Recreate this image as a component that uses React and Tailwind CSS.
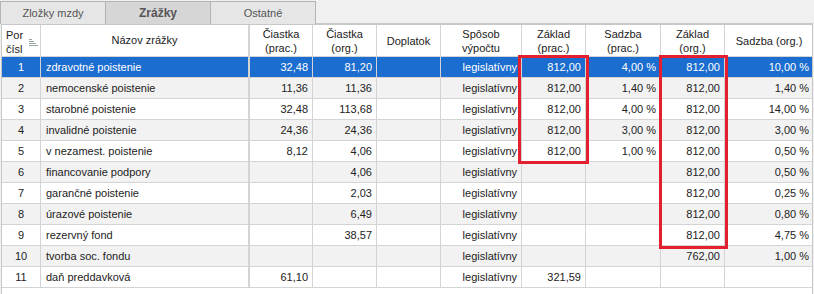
import React from 'react';

const cols = 'grid-cols-[39px_209px_63px_64px_64px_81px_64px_75px_64px_88px]';

const rows = [
    ['1', 'zdravotné poistenie', '32,48', '81,20', '', 'legislatívny', '812,00', '4,00 %', '812,00', '10,00 %'],
    ['2', 'nemocenské poistenie', '11,36', '11,36', '', 'legislatívny', '812,00', '1,40 %', '812,00', '1,40 %'],
    ['3', 'starobné poistenie', '32,48', '113,68', '', 'legislatívny', '812,00', '4,00 %', '812,00', '14,00 %'],
    ['4', 'invalidné poistenie', '24,36', '24,36', '', 'legislatívny', '812,00', '3,00 %', '812,00', '3,00 %'],
    ['5', 'v nezamest. poistenie', '8,12', '4,06', '', 'legislatívny', '812,00', '1,00 %', '812,00', '0,50 %'],
    ['6', 'financovanie podpory', '', '4,06', '', 'legislatívny', '', '', '812,00', '0,50 %'],
    ['7', 'garančné poistenie', '', '2,03', '', 'legislatívny', '', '', '812,00', '0,25 %'],
    ['8', 'úrazové poistenie', '', '6,49', '', 'legislatívny', '', '', '812,00', '0,80 %'],
    ['9', 'rezervný fond', '', '38,57', '', 'legislatívny', '', '', '812,00', '4,75 %'],
    ['10', 'tvorba soc. fondu', '', '', '', 'legislatívny', '', '', '762,00', '1,00 %'],
    ['11', 'daň preddavková', '61,10', '', '', 'legislatívny', '321,59', '', '', ''],
];

const headers = [
    ['Čiastka', '(prac.)'],
    ['Čiastka', '(org.)'],
    ['Doplatok'],
    ['Spôsob', 'výpočtu'],
    ['Základ', '(prac.)'],
    ['Sadzba', '(prac.)'],
    ['Základ', '(org.)'],
    ['Sadzba (org.)'],
];

const SortIcon = () => (
    <svg width="9" height="7" viewBox="0 0 9 7" className="ml-[6px] mt-[11px]">
        <rect x="0" y="0" width="3" height="1" fill="#9aa8a0" />
        <rect x="0" y="2" width="5" height="1" fill="#9aa8a0" />
        <rect x="0" y="4" width="7" height="1" fill="#9aa8a0" />
        <rect x="0" y="6" width="9" height="1" fill="#9aa8a0" />
    </svg>
);

const Tab = ({ label, active }) => (
    <div
        className={`w-[106px] h-[23px] flex items-center justify-center border border-b-0 border-[#b4b4b4] -ml-px first:ml-0 text-[#555] ${
            active ? 'bg-[#d6d6d6] font-bold text-[12px]' : 'bg-[#e6e6e6]'
        }`}
    >
        {label}
    </div>
);

export default function App() {
    return (
        <div
            className="w-[814px] h-[294px] bg-[#f0f0f0] overflow-hidden text-[11px] text-[#222] relative"
            style={{ fontFamily: '"Liberation Sans", Arial, sans-serif' }}
        >
            <div className="flex pt-px h-[23px]">
                <Tab label="Zložky mzdy" />
                <Tab label="Zrážky" active />
                <Tab label="Ostatné" />
            </div>

            <div className="ml-px w-[812px] h-[271px] bg-white border-l border-t-2 border-r border-[#c8c8c8]">
                {/* header */}
                <div className={`grid ${cols} h-[32px]`}>
                    <div className="flex items-start pl-[4px] pt-[3px] leading-[14px] border-r border-b border-[#d4d4d4]">
                        <div>Por<br />čísl</div>
                        <SortIcon />
                    </div>
                    <div className="flex items-center justify-center border-r-2 border-b border-[#d4d4d4]">Názov zrážky</div>
                    {headers.map((h, i) => (
                        <div
                            key={i}
                            className="flex flex-col items-center justify-center leading-[14px] border-r border-b border-[#d4d4d4] last:border-r-0"
                        >
                            {h.map((l) => (
                                <span key={l}>{l}</span>
                            ))}
                        </div>
                    ))}
                </div>

                {/* rows */}
                {rows.map((r, ri) => {
                    const sel = ri === 0;
                    const bg = sel ? 'bg-[#1c6dd0] text-white' : ri % 2 === 1 ? 'bg-[#f2f2f2]' : 'bg-white';
                    const line = sel ? 'border-[#5b97e0]' : 'border-[#d4d4d4]';
                    return (
                        <div key={ri} className={`grid ${cols} h-[21px] ${bg}`}>
                            {r.map((c, ci) => {
                                let align = 'justify-end pr-[4px]';
                                if (ci === 0) align = 'justify-center';
                                if (ci === 1) align = 'justify-start pl-[5px]';
                                const br = ci === 1 ? 'border-r-2' : ci === 9 ? '' : 'border-r';
                                return (
                                    <div
                                        key={ci}
                                        className={`flex items-center whitespace-nowrap overflow-hidden border-b border-[#d4d4d4] ${br} ${line} ${align}`}
                                    >
                                        {c}
                                    </div>
                                );
                            })}
                        </div>
                    );
                })}
            </div>

            {/* red highlight boxes */}
            <div className="absolute left-[518px] top-[55px] w-[71px] h-[109px] border-[3px] border-[#e5202e]" />
            <div className="absolute left-[659px] top-[55px] w-[69px] h-[194px] border-[3px] border-[#e5202e]" />
        </div>
    );
}
